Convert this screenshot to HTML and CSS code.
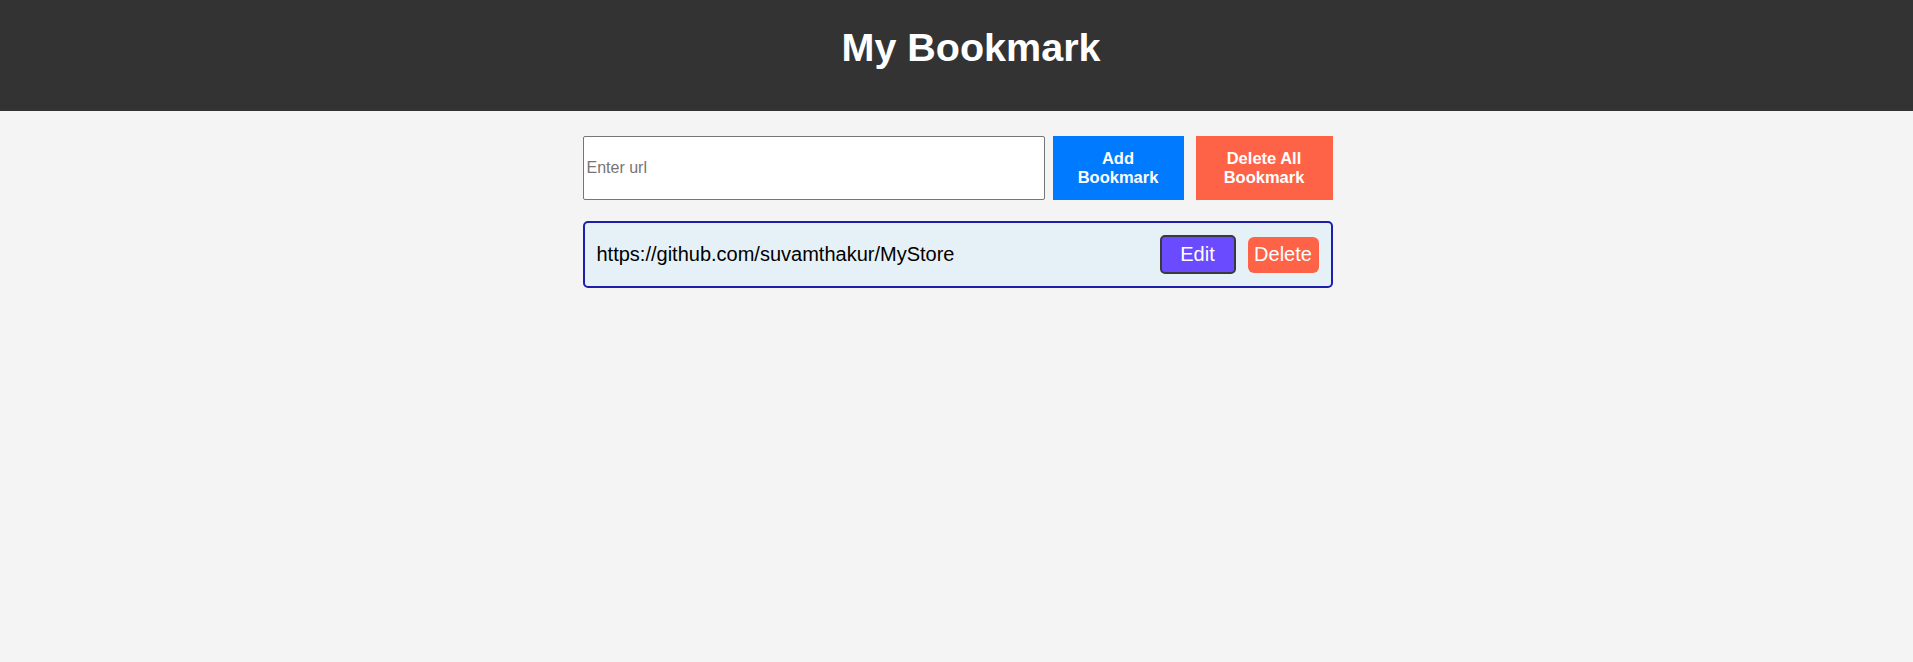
FILE: index.html
```html
<!DOCTYPE html>
<html lang="en">
<head>
<meta charset="UTF-8">
<title>My Bookmark</title>
<link rel="stylesheet" href="styles.css">
</head>
<body>
<header class="site-header">
  <h1 class="site-title">My Bookmark</h1>
</header>
<main class="container">
  <div class="add-row">
    <input class="url-input" type="text" placeholder="Enter url">
    <button class="btn-add">Add Bookmark</button>
    <button class="btn-delete-all">Delete All Bookmark</button>
  </div>
  <ul class="bookmark-list">
    <li class="bookmark-item">
      <span class="bookmark-url">https://github.com/suvamthakur/MyStore</span>
      <div class="item-actions">
        <button class="btn-edit">Edit</button>
        <button class="btn-delete">Delete</button>
      </div>
    </li>
  </ul>
</main>
</body>
</html>
```

FILE: styles.css
```css
* {
  box-sizing: border-box;
}

body {
  margin: 0;
  background: #f4f4f4;
  font-family: "Liberation Sans", Arial, sans-serif;
  color: #000;
}

.site-header {
  background: #333333;
  height: 111px;
  padding: 24px 0 0 29px;
}

.site-title {
  margin: 0;
  text-align: center;
  color: #ffffff;
  font-size: 39.5px;
  font-weight: bold;
  line-height: 46px;
}

.container {
  width: 750px;
  margin: 25px auto 0;
  position: relative;
  left: 1px;
}

.add-row {
  display: flex;
  height: 64px;
}

.url-input {
  width: 462px;
  height: 64px;
  border: 1px solid #767676;
  border-radius: 2px;
  padding: 0 3px;
  font-family: "Liberation Sans", Arial, sans-serif;
  font-size: 16px;
  background: #ffffff;
  color: #000;
}

.url-input::placeholder {
  color: #757575;
}

.btn-add,
.btn-delete-all {
  height: 64px;
  border: none;
  color: #ffffff;
  font-family: "Liberation Sans", Arial, sans-serif;
  font-size: 16.5px;
  font-weight: bold;
  line-height: 19.5px;
  padding: 0 20px;
  cursor: pointer;
}

.btn-add {
  width: 131px;
  margin-left: 8px;
  background: #007bff;
}

.btn-delete-all {
  width: 137px;
  margin-left: 12px;
  background: #ff6347;
}

.bookmark-list {
  list-style: none;
  margin: 21px 0 0;
  padding: 0;
}

.bookmark-item {
  display: flex;
  align-items: center;
  justify-content: space-between;
  height: 67px;
  padding: 0 12px;
  border: 2px solid #1e1eac;
  border-radius: 5px;
  background: #e6f1f7;
}

.bookmark-url {
  font-size: 20px;
  color: #000;
}

.item-actions {
  display: flex;
  align-items: center;
  gap: 12px;
}

.btn-edit {
  width: 76px;
  height: 39px;
  padding: 0;
  border: 2px solid #3a3a3a;
  border-radius: 5px;
  background: #6a4bff;
  color: #ffffff;
  font-family: "Liberation Sans", Arial, sans-serif;
  font-size: 20px;
}

.btn-delete {
  width: 71px;
  height: 36px;
  padding: 0;
  border: none;
  border-radius: 6px;
  background: #ff6347;
  color: #ffffff;
  font-family: "Liberation Sans", Arial, sans-serif;
  font-size: 20px;
}
```
